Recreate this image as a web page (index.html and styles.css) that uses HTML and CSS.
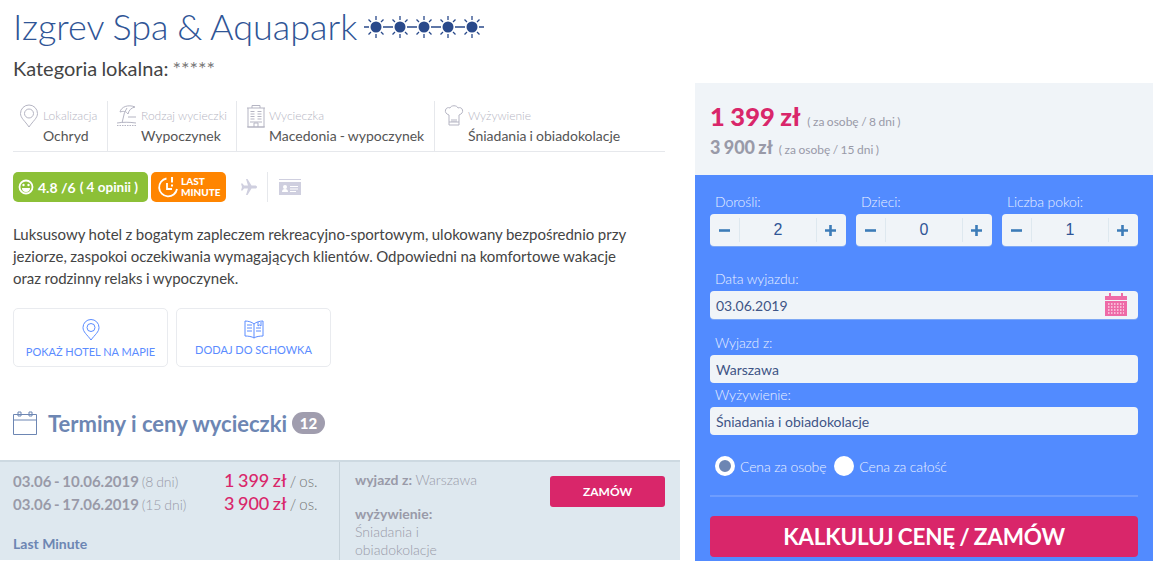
FILE: index.html
```html
<!DOCTYPE html>
<html lang="pl">
<head>
    <meta charset="UTF-8">
    <title>Izgrev Spa &amp; Aquapark</title>
    <link rel="stylesheet" href="styles.css">
</head>
<body>
<div class="page">
    <div class="main">
        <div class="hotel-head">
            <h1>Izgrev Spa &amp; Aquapark</h1>
            <svg class="suns" width="122" height="24" viewBox="0 0 122 24">
                <defs>
                    <g id="sun">
                        <circle cx="12" cy="12" r="5.500" fill="#2a4a8b"/>
                        <path d="M12 1v4M12 19v4M0 12h5M19 12h5M4.500 4.500l2.500 2.500M17 17l2.500 2.500M4.500 19.500l2.500-2.500M17 7l2.500-2.500" stroke="#2a4a8b" stroke-width="1.300" fill="none"/>
                    </g>
                </defs>
                <use href="#sun" x="0"/>
                <use href="#sun" x="24"/>
                <use href="#sun" x="48"/>
                <use href="#sun" x="72"/>
                <use href="#sun" x="96"/>
            </svg>
        </div>
        <div class="local-cat">Kategoria lokalna: <span>*****</span></div>

        <div class="info-row">
            <div class="info-cell cell-1">
                <svg class="info-icon" width="20" height="24" viewBox="0 0 20 24" fill="none" stroke="#b5b5c3" stroke-width="1"><path d="M10 23C6 17 1.500 14 1.500 9.500a8.500 8.500 0 0 1 17 0C18.500 14 14 17 10 23z"/><circle cx="10" cy="9.500" r="4.500"/></svg>
                <div><div class="info-label">Lokalizacja</div><div class="info-value">Ochryd</div></div>
            </div>
            <div class="info-cell cell-2">
                <svg class="info-icon" width="21" height="24" viewBox="0 0 21 24" fill="none" stroke="#b5b5c3" stroke-width="1"><path d="M4 8C5 3 12 0 19 3 15 4 13 6 12 10 10 7 7 7 4 8z"/><path d="M11 4 8.500 8.500 6 19M12 13h8M1 19c6-1 12-1 19 0"/><path d="M1 21.500h19" stroke-dasharray="1.500 1"/></svg>
                <div><div class="info-label">Rodzaj wycieczki</div><div class="info-value">Wypoczynek</div></div>
            </div>
            <div class="info-cell cell-3">
                <svg class="info-icon" width="20" height="24" viewBox="0 0 20 24" fill="none" stroke="#b5b5c3" stroke-width="1"><path d="M1 4h18M2 4v19h16V4M6 4V1.500h8V4M1 23h18M4.500 7.500h4M4.500 10h4M4.500 12.500h4M4.500 15h4M11.500 7.500h4M11.500 10h4M11.500 12.500h4M11.500 15h4M8 23v-4h4v4M4 18h12"/></svg>
                <div><div class="info-label">Wycieczka</div><div class="info-value">Macedonia - wypoczynek</div></div>
            </div>
            <div class="info-cell cell-4">
                <svg class="info-icon" width="20" height="24" viewBox="0 0 20 24" fill="none" stroke="#b5b5c3" stroke-width="1"><path d="M5 21V11C2 10 1 8 1.500 6 2 4 4 3 6 4c1-3 7-3 8 0 2-1 4 0 4.500 2 .5 2-.5 4-3.500 5v10zM5 18h10M8 15v3M10 15v3M12 15v3"/></svg>
                <div><div class="info-label">Wyżywienie</div><div class="info-value">Śniadania i obiadokolacje</div></div>
            </div>
        </div>

        <div class="badges">
            <div class="badge-rating">
                <svg width="16" height="16" viewBox="0 0 16 16"><circle cx="8" cy="8" r="6.500" fill="none" stroke="#fff" stroke-width="1.800"/><circle cx="5.500" cy="6" r="1.200" fill="#fff"/><circle cx="10.500" cy="6" r="1.200" fill="#fff"/><path d="M4 9h8a4 4 0 0 1-8 0z" fill="#fff"/></svg>
                <span class="rating-num">4.8 /6</span> <span class="rating-count">( 4 opinii )</span>
            </div>
            <div class="badge-last">
                <svg width="22" height="22" viewBox="0 0 22 22" fill="none" stroke="#fff" stroke-width="1.800"><path d="M9.500 2.500A9 9 0 1 0 20 13"/><path d="M10 7v6h5"/><path d="M15 1v5.500M15 8.500v2" stroke-width="2"/></svg>
                <span>LAST<br>MINUTE</span>
            </div>
            <svg class="plane" width="18" height="18" viewBox="0 0 18 18"><path d="M17 9c0-1-1-1.500-2-1.500h-3.500L7.500 1H6l2 6.500H4L2.500 5.500H1L2 9 1 12.500h1.500L4 10.500h4L6 17h1.500l4-6.500H15c1 0 2-.5 2-1.500z" fill="#cfcfdf"/></svg>
            <div class="badge-sep"></div>
            <svg width="22" height="16" viewBox="0 0 22 16"><path d="M0 0h22v1H0z" fill="#cfcfdf"/><path d="M0 3h22v13H0z" fill="#cfcfdf"/><circle cx="6" cy="8" r="2" fill="#fff"/><path d="M3 13c0-2 1-3 3-3s3 1 3 3zM11 7h8v1h-8zM11 9.500h8v1h-8zM11 12h6v1h-6z" fill="#fff"/></svg>
        </div>

        <p class="lead">Luksusowy hotel z bogatym zapleczem rekreacyjno-sportowym, ulokowany bezpośrednio przy jeziorze, zaspokoi oczekiwania wymagających klientów. Odpowiedni na komfortowe wakacje oraz rodzinny relaks i wypoczynek.</p>

        <div class="actions">
            <a class="action-btn">
                <svg width="18" height="22" viewBox="0 0 18 22" fill="none" stroke="#5b8cff" stroke-width="1"><path d="M9 21C5 15.500 1 13 1 8.500a8 8 0 0 1 16 0C17 13 13 15.500 9 21z"/><circle cx="9" cy="8.500" r="4"/></svg>
                POKAŻ HOTEL NA MAPIE
            </a>
            <a class="action-btn">
                <svg width="20" height="20" viewBox="0 0 20 20" fill="none" stroke="#5b8cff" stroke-width="1"><path d="M10 5C8 3 4 2 1 2v15c3 0 7 .5 9 2 2-1.500 6-2 9-2V2c-3 0-7 1-9 3zM10 5v14M3 6h5M3 9h5M3 12h5M12 9h5M12 12h5M14 3v4l1.500-1L17 7V3"/></svg>
                DODAJ DO SCHOWKA
            </a>
        </div>

        <div class="section-head">
            <svg width="24" height="24" viewBox="0 0 24 24" fill="none" stroke="#6d86b3" stroke-width="1"><path d="M.5 3.500h23v20H.5zM.5 9h23M5 1h3v4H5zM16 1h3v4h-3z"/></svg>
            <h2>Terminy i ceny wycieczki</h2>
            <span class="count">12</span>
        </div>

        <div class="term">
            <div class="term-left">
                <div class="term-line"><div class="term-date">03.06 - 10.06.2019 <span>(8 dni)</span></div><div class="term-price"><b>1 399 zł</b> / os.</div></div>
                <div class="term-line"><div class="term-date">03.06 - 17.06.2019 <span>(15 dni)</span></div><div class="term-price"><b>3 900 zł</b> / os.</div></div>
                <div class="term-tag">Last Minute</div>
            </div>
            <div class="term-right">
                <div class="term-details">
                    <div class="term-from"><b>wyjazd z:</b> Warszawa</div>
                    <div class="term-food"><b>wyżywienie:</b><br>Śniadania i obiadokolacje</div>
                </div>
                <button class="order-small" type="button">ZAMÓW</button>
            </div>
        </div>
    </div>

    <div class="side">
        <div class="price-box">
            <div class="price-main"><b>1 399 zł</b> <span>( za osobę / 8 dni )</span></div>
            <div class="price-alt"><b>3 900 zł</b> <span>( za osobę / 15 dni )</span></div>
        </div>
        <form class="calc">
            <div class="steppers">
                <div class="stepper-field">
                    <label>Dorośli:</label>
                    <div class="stepper">
                        <span class="step"><svg width="11" height="11" viewBox="0 0 11 11"><path d="M0 4.200h11v2.600H0z"/></svg></span>
                        <span class="step-val">2</span>
                        <span class="step"><svg width="11" height="11" viewBox="0 0 11 11"><path d="M0 4.200h4.200V0h2.600v4.200H11v2.600H6.800V11H4.200V6.800H0z"/></svg></span>
                    </div>
                </div>
                <div class="stepper-field">
                    <label>Dzieci:</label>
                    <div class="stepper">
                        <span class="step"><svg width="11" height="11" viewBox="0 0 11 11"><path d="M0 4.200h11v2.600H0z"/></svg></span>
                        <span class="step-val">0</span>
                        <span class="step"><svg width="11" height="11" viewBox="0 0 11 11"><path d="M0 4.200h4.200V0h2.600v4.200H11v2.600H6.800V11H4.200V6.800H0z"/></svg></span>
                    </div>
                </div>
                <div class="stepper-field">
                    <label>Liczba pokoi:</label>
                    <div class="stepper">
                        <span class="step"><svg width="11" height="11" viewBox="0 0 11 11"><path d="M0 4.200h11v2.600H0z"/></svg></span>
                        <span class="step-val">1</span>
                        <span class="step"><svg width="11" height="11" viewBox="0 0 11 11"><path d="M0 4.200h4.200V0h2.600v4.200H11v2.600H6.800V11H4.200V6.800H0z"/></svg></span>
                    </div>
                </div>
            </div>
            <label class="field-label date-label">Data wyjazdu:</label>
            <div class="input date-input">03.06.2019
                <svg width="22" height="24" viewBox="0 0 22 24"><path d="M0 3h4V0h2v3h10V0h2v3h4v4H0z" fill="#ee6aa7"/><path d="M0 8h22v15H0z" fill="#ee6aa7"/><path d="M3 11h16M3 14h16M3 17h16M3 20h16" stroke="#fbd5e6" stroke-width="1.500" stroke-dasharray="1.500 1.500"/></svg>
            </div>
            <label class="field-label from-label">Wyjazd z:</label>
            <div class="input">Warszawa</div>
            <label class="field-label food-label">Wyżywienie:</label>
            <div class="input">Śniadania i obiadokolacje</div>
            <div class="radios">
                <span class="radio on"></span><span class="radio-text">Cena za osobę</span>
                <span class="radio"></span><span class="radio-text">Cena za całość</span>
            </div>
            <button class="order-big" type="button">KALKULUJ CENĘ / ZAMÓW</button>
        </form>
    </div>
</div>
</body>
</html>
```

FILE: styles.css
```css
html, body {
    margin: 0;
    height: 561px;
    overflow: hidden;
    background-color: white;
}

body {
    font-family: Lato, "Open Sans", sans-serif;
    color: #444;
}

.page {
    display: flex;
    width: 1156px;
    height: 561px;
}

.main {
    width: 680px;
    flex-shrink: 0;
}

.hotel-head {
    display: flex;
    align-items: center;
    padding: 6px 0 0 13px;
    height: 41px;
}

h1 {
    margin: 0;
    font-size: 36px;
    font-weight: 300;
    line-height: 41px;
    word-spacing: -1px;
    color: #2f5596;
}

.suns {
    margin-left: 7px;
    margin-top: 1px;
}

.local-cat {
    margin: 9px 0 0 13px;
    font-size: 20px;
    line-height: 25px;
    word-spacing: -1px;
    color: #444;
}

.local-cat span {
    color: #777;
}

.info-row {
    display: flex;
    margin: 20px 15px 0 13px;
    height: 50px;
    border-bottom: 1px solid #e6e8ec;
}

.info-cell {
    display: flex;
    align-items: flex-start;
    padding: 7px 0 0 6px;
    border-right: 1px solid #e6e8ec;
    box-sizing: border-box;
}

.cell-1 { width: 95px; }
.cell-2 { width: 129px; padding-left: 8px; }
.cell-3 { width: 198px; padding-left: 9px; }
.cell-4 { border-right: none; flex: 1; padding-left: 9px; }

.info-icon {
    flex-shrink: 0;
    margin-right: 4px;
    margin-top: -4px;
}

.cell-3 .info-icon {
    margin-right: 3px;
}

.info-label {
    font-size: 12px;
    font-weight: 300;
    line-height: 16px;
    color: #b5b5c3;
    white-space: nowrap;
}

.info-value {
    margin-top: 3px;
    font-size: 14px;
    line-height: 18px;
    word-spacing: -.5px;
    color: #555;
    white-space: nowrap;
}

.badges {
    display: flex;
    align-items: center;
    margin: 20px 0 0 13px;
    height: 30px;
}

.badge-rating {
    display: flex;
    align-items: center;
    gap: 4px;
    width: 135px;
    height: 30px;
    padding-left: 5px;
    box-sizing: border-box;
    border-radius: 5px;
    background-color: #8cc037;
    color: white;
    white-space: pre;
}

.rating-num {
    font-size: 14px;
    font-weight: 700;
}

.rating-count {
    font-size: 13.5px;
    font-weight: 700;
}

.badge-last {
    display: flex;
    align-items: center;
    gap: 2px;
    width: 75px;
    height: 30px;
    margin-left: 3px;
    padding-left: 6px;
    box-sizing: border-box;
    border-radius: 5px;
    background-color: #ff8500;
    color: white;
    font-size: 10px;
    font-weight: 900;
    line-height: 11px;
}

.plane {
    margin-left: 14px;
}

.badge-sep {
    width: 1px;
    height: 30px;
    margin: 0 11px 0 9px;
    background-color: #e6e8ec;
}

.lead {
    margin: 21px 0 0 13px;
    width: 625px;
    font-size: 15px;
    line-height: 22px;
    word-spacing: -.4px;
    color: #444;
}

.actions {
    display: flex;
    gap: 8px;
    margin: 19px 0 0 13px;
}

.action-btn {
    display: flex;
    flex-direction: column;
    align-items: center;
    gap: 4px;
    width: 155px;
    height: 59px;
    padding-top: 10px;
    box-sizing: border-box;
    border: 1px solid #e9ebef;
    border-radius: 5px;
    color: #5b8cff;
    font-size: 11px;
    line-height: 14px;
}

.section-head {
    display: flex;
    align-items: center;
    margin: 41px 0 0 13px;
    height: 30px;
}

h2 {
    margin: 0 5px 0 11px;
    font-size: 22px;
    font-weight: 700;
    color: #6d86b3;
}

.count {
    width: 33px;
    height: 22px;
    border-radius: 11px;
    background-color: #a09dae;
    color: white;
    font-size: 15px;
    font-weight: 900;
    line-height: 22px;
    text-align: center;
}

.term {
    display: flex;
    margin-top: 22px;
    height: 98px;
    border-top: 2px solid #cdd9e1;
    background-color: #dee8ef;
}

.term-left {
    width: 340px;
    padding: 7px 22px 0 13px;
    box-sizing: border-box;
    border-right: 1px solid #c6d2da;
}

.term-line {
    display: flex;
    justify-content: space-between;
    align-items: baseline;
    height: 23px;
}

.term-date {
    font-size: 15px;
    font-weight: 700;
    word-spacing: -1px;
    color: #999aa8;
}

.term-date span {
    font-size: 14px;
    font-weight: 300;
}

.term-price {
    width: 93px;
    font-size: 15px;
    font-weight: 300;
    word-spacing: -1px;
    white-space: nowrap;
    color: #777;
}

.term-price b {
    font-size: 18px;
    font-weight: 500;
    color: #d9266a;
}

.term-tag {
    margin-top: 20px;
    font-size: 14px;
    font-weight: 700;
    color: #6d86b3;
}

.term-right {
    display: flex;
    flex: 1;
    padding: 9px 15px 0 15px;
}

.term-details {
    width: 195px;
    font-size: 14px;
    font-weight: 300;
    line-height: 18px;
    color: #999aa8;
}

.term-details b {
    font-weight: 700;
}

.term-food {
    width: 90px;
    margin-top: 16px;
}

.order-small {
    width: 115px;
    height: 31px;
    margin-top: 5px;
    border: none;
    border-radius: 3px;
    background-color: #d9266a;
    color: white;
    font-family: inherit;
    font-size: 12px;
    font-weight: 700;
}

.side {
    width: 458px;
    margin-left: 15px;
    margin-top: 83px;
    flex-shrink: 0;
}

.price-box {
    height: 92px;
    padding: 18px 0 0 15px;
    box-sizing: border-box;
    background-color: #f0f4f8;
}

.price-main {
    line-height: 30px;
    word-spacing: -.5px;
}

.price-main b {
    font-size: 25.5px;
    font-weight: 900;
    color: #d9266a;
}

.price-main span, .price-alt span {
    margin-left: 3px;
    font-size: 12px;
    word-spacing: -.6px;
    color: #999aa8;
}

.price-alt {
    margin-top: -2px;
    line-height: 24px;
    word-spacing: -1px;
}

.price-alt b {
    font-size: 18px;
    font-weight: 900;
    color: #999aa8;
}

.calc {
    height: 386px;
    padding: 18px 15px 0 15px;
    box-sizing: border-box;
    background-color: #528bff;
    color: #eaf0ff;
}

.steppers {
    display: flex;
    gap: 10px;
}

.stepper-field {
    width: 136px;
}

label {
    display: block;
    padding-left: 5px;
    font-size: 14px;
    font-weight: 300;
    line-height: 17px;
    letter-spacing: -.1px;
}

.stepper {
    display: flex;
    align-items: center;
    height: 32px;
    margin-top: 4px;
    border-radius: 4px;
    background-color: #f0f4f8;
    box-shadow: 0 1px 0 #7ea8f5;
}

.step {
    display: flex;
    justify-content: center;
    width: 29px;
    flex-shrink: 0;
    box-sizing: border-box;
    fill: #3d7cb8;
}

.step:last-child {
    padding-right: 3px;
}

.step-val {
    flex: 1;
    border-left: 1px solid #dee8ef;
    border-right: 1px solid #dee8ef;
    color: #2f5596;
    font-family: "Liberation Sans", sans-serif;
    font-size: 16px;
    line-height: 24px;
    text-align: center;
}

.input {
    display: flex;
    justify-content: space-between;
    align-items: center;
    height: 28px;
    padding: 0 6px;
    box-sizing: border-box;
    border-radius: 4px;
    background-color: #f0f4f8;
    color: #3f5586;
    font-size: 14px;
}

.field-label {
    margin-top: 0;
    margin-bottom: 3px;
}

.date-label {
    margin-top: 24px;
    margin-bottom: 4px;
}

.date-input {
    padding-right: 11px;
    box-shadow: 0 1px 0 #7ea8f5;
}

.from-label {
    margin-top: 15px;
    margin-bottom: 4px;
}

.food-label {
    margin-top: 3px;
    margin-bottom: 4px;
}

.radios {
    display: flex;
    align-items: center;
    height: 42px;
    margin-top: 10px;
    padding-left: 5px;
    padding-bottom: 8px;
    border-bottom: 2px solid #6e9dff;
}

.radio {
    width: 20px;
    height: 20px;
    box-sizing: border-box;
    border-radius: 50%;
    background-color: white;
}

.radio.on {
    border: 4px solid white;
    background-color: #6d86b3;
}

.radio-text {
    margin: 0 8px 0 5px;
    font-size: 14px;
    font-weight: 300;
    letter-spacing: -.15px;
}

.order-big {
    width: 100%;
    height: 41px;
    margin-top: 19px;
    padding: 0;
    border: none;
    border-radius: 4px;
    background-color: #d9266a;
    color: white;
    font-family: inherit;
    font-size: 22.5px;
    font-weight: 700;
    letter-spacing: -.2px;
    word-spacing: -1px;
    line-height: 41px;
}
```
